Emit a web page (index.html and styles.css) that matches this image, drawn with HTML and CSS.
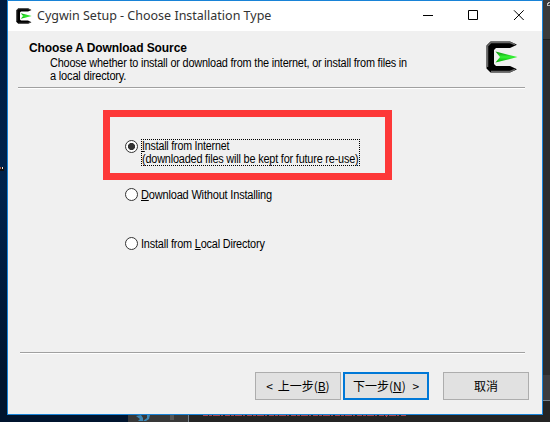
FILE: index.html
```html
<!DOCTYPE html>
<html lang="zh-CN">
<head>
<meta charset="utf-8">
<title>Cygwin Setup</title>
<link rel="stylesheet" href="styles.css">
</head>
<body>
<div class="desktop">
  <svg class="backdrop" width="550" height="422" viewBox="0 0 550 422" shape-rendering="crispEdges" aria-hidden="true">
    <path d="M543 0h7v39h-7z" fill="#3a3a3a"/>
    <path d="M543 39h7v1h-7z" fill="#1d1d1d"/>
    <path d="M543 40h7v335h-7z" fill="#2d2d2e"/>
    <path d="M543 375h7v25h-7z" fill="#3d3d40"/>
    <path d="M543 400h7v1h-7z" fill="#75818b"/>
    <path d="M188 415h362v7H188z" fill="#242424"/>
    <path d="M543 401h7v14h-7z" fill="#242424"/>
    <path d="M128 415h60v7h-60z" fill="#383838"/>
    <path d="M188 415h1v7h-1z" fill="#75818b"/>
    <path d="M170 415h4v5h-4z" fill="#555"/>
    <path d="M136 416l5-1 2 3v3h-5l2-2zM147 415h3l-1 4-3 2h-3l4-3z" fill="#3b86b5" shape-rendering="auto"/>
    <path d="M203 415.5h203" stroke="#b0484e" stroke-dasharray="5 1 3 1 7 1 2 2"/>
    <path d="M386 416.500h1" stroke="#b0484e"/>
    <path d="M547 5l2-3h1M547 5h3" stroke="#bbb" fill="none"/>
    <path d="M0 167h4v4H0z" fill="#111"/>
    <path d="M0 167h1v2H0z" fill="#a54"/><path d="M2 167h1v2H2z" fill="#eee"/>
  </svg>
  <main class="window">
    <header class="titlebar">
      <svg class="app-icon" viewBox="0 0 32 32"><use href="#logo"/></svg>
      <span class="title">Cygwin Setup - Choose Installation Type</span>
      <svg class="controls" width="102" height="12" viewBox="0 0 102 12" fill="none" stroke="#000">
        <path d="M0 6.500h10"/><path d="M45.500 1.500h9v9h-9z"/><path d="M91 1.300l9.700 9.700M100.700 1.300L91 11"/>
      </svg>
    </header>
    <section class="banner">
      <div class="copy">
        <h1><span>Choose A Download Source</span></h1>
        <p><span class="narrow">Choose whether to install or download from the internet, or install from files in</span><br><span class="narrow line2">a local directory.</span></p>
      </div>
      <svg class="logo" width="32" height="32" viewBox="0 0 32 32">
        <defs>
          <linearGradient id="green" x2="0" y2="1"><stop stop-color="#078b07"/><stop offset=".5" stop-color="#35f435"/><stop offset="1" stop-color="#00a800"/></linearGradient>
          <g id="logo">
            <path d="M4.500 .5H24L31 3.800 24 7H10L8 9V23L10 25H24L31 28.300 24 31.500H4.500L.5 27.500V4.500z" fill="#000"/>
            <path d="M1.500 26V5L5 1.500H24L29 3.500M5 30.500H24L29 28.500" fill="none" stroke="#666" stroke-width="1.500"/>
            <path d="M9.500 10.500L31.500 16 9.500 21.500 14 16z" fill="url(#green)"/>
          </g>
        </defs>
        <use href="#logo"/>
      </svg>
    </section>
    <section class="options">
      <div class="highlight">
        <label class="option"><i class="radio checked"></i><span class="focus"><span class="narrow o1"><u>I</u>nstall from Internet</span><br><span class="narrow">(downloaded files will be kept for future re-use)</span></span></label>
      </div>
      <label class="option second"><i class="radio"></i><span class="narrow o3"><u>D</u>ownload Without Installing</span></label>
      <label class="option third"><i class="radio"></i><span class="narrow">Install from <u>L</u>ocal Directory</span></label>
    </section>
    <footer class="footer">
      <button><span>&lt; 上一步(<u>B</u>)</span></button>
      <button class="primary"><span>下一步(<u>N</u>) &gt;</span></button>
      <button class="cancel"><span>取消</span></button>
    </footer>
  </main>
</div>
</body>
</html>
```
FILE: styles.css
```css
* { box-sizing: border-box; }
body { margin: 0; overflow: hidden; }
.desktop {
  position: relative;
  width: 550px;
  height: 422px;
  padding-left: 7px;
  background: linear-gradient(#001b40, #00234c 45%, #00142e 90%);
}
.backdrop { position: absolute; left: 0; top: 0; }
.window {
  position: relative;
  display: flex;
  flex-direction: column;
  width: 536px;
  height: 415px;
  border: 1px solid #1883d7;
  background: #f0f0f0;
  color: #000;
  font: 12px/13px "Liberation Sans", "Noto Sans CJK SC", sans-serif;
}
.titlebar {
  display: flex;
  align-items: center;
  height: 30px;
  padding: 0 17px 0 8px;
  background: #fff;
}
.app-icon { width: 16px; height: 16px; margin-top: -1px; }
.title {
  margin-left: 5px;
  font: 12.500px/20px "Noto Sans", "Noto Sans CJK SC", sans-serif;
  letter-spacing: 0;
  white-space: nowrap;
  color: #333;
}
.controls { margin: -2px 0 0 auto; }
.banner {
  display: flex;
  justify-content: space-between;
  height: 57px;
  margin: 0 17px 0 10px;
  padding: 10px 7px 0 11px;
  border-bottom: 1px solid #a0a0a0;
  box-shadow: 0 1px #fff;
}
h1 { margin: 0; font-size: 12px; line-height: 14px; letter-spacing: -.08px; white-space: nowrap; }
p { margin: 2px 0 0 21px; white-space: nowrap; }
.narrow {
  display: inline-block;
  letter-spacing: -.2px;
  transform: scaleX(.906);
  transform-origin: 0 0;
}
.line2 { transform: scaleX(.92); }
.o1 { transform: scaleX(.885); }
.o3 { transform: scaleX(.918); }
u { text-decoration-thickness: 1px; text-underline-offset: 1px; }
.options {
  display: flex;
  flex-direction: column;
  align-items: flex-start;
  height: 265px;
  margin: 0 17px 0 12px;
  padding: 22px 0 0 83px;
  border-bottom: 1px solid #a0a0a0;
  box-shadow: 0 1px #fff;
}
.highlight {
  width: 289px;
  height: 70px;
  padding: 22px 0 0 15px;
  border: 7px solid #fd3838;
}
.option { display: flex; align-items: center; white-space: nowrap; }
.radio {
  width: 13px;
  height: 13px;
  margin-right: 3px;
  border: 1px solid #333;
  border-radius: 50%;
  background: #fff;
}
.checked { background: radial-gradient(circle, #333 3.200px, #fff 3.900px); }
.focus { width: 219px; height: 27px; border: 1px dotted #000; }
.highlight .radio { margin-top: -13px; }
.second, .third { height: 13px; }
.second { margin: 8px 0 0 22px; }
.third { margin: 36px 0 0 22px; }
.second .narrow, .third .narrow { padding-top: 2px; }
.footer {
  display: flex;
  justify-content: flex-end;
  padding: 19px 13px 0 0;
}
button {
  width: 86px;
  height: 28px;
  margin-right: 2px;
  padding: 0;
  border: 1px solid #adadad;
  background: #e1e1e1;
  color: #000;
  font: 12px/24px "Noto Sans CJK SC", sans-serif;
}
button span { white-space: nowrap; word-spacing: 2px; }
.primary { border: 2px solid #0078d7; }
.primary span { word-spacing: 4px; }
.cancel { margin: 0 0 0 12px; }
```
